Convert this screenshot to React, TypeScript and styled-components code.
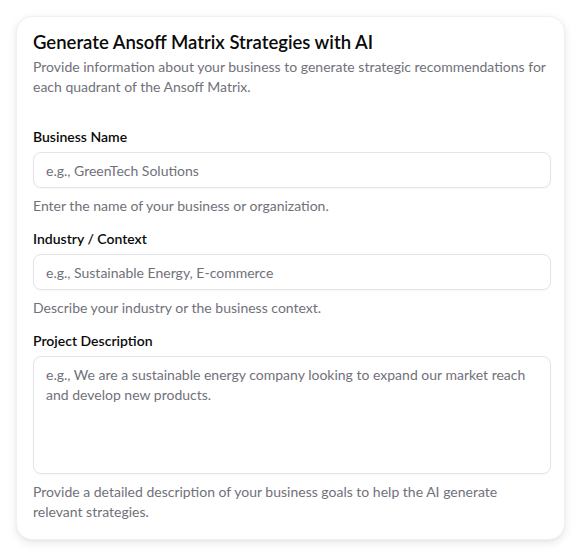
import React from 'react';
import styled, { createGlobalStyle } from 'styled-components';

const GlobalStyle = createGlobalStyle`
  html, body {
    margin: 0;
    padding: 0;
    background: #ffffff;
  }
  body {
    font-family: "Segoe UI", Lato, "Noto Sans", sans-serif;
    color: #0a0a0a;
  }
  * {
    box-sizing: border-box;
  }
`;

type Field = {
  id: string;
  label: string;
  placeholder: string;
  hint: string;
  multiline?: boolean;
};

const fields: Field[] = [
  {
    id: 'businessName',
    label: 'Business Name',
    placeholder: 'e.g., GreenTech Solutions',
    hint: 'Enter the name of your business or organization.',
  },
  {
    id: 'industry',
    label: 'Industry / Context',
    placeholder: 'e.g., Sustainable Energy, E-commerce',
    hint: 'Describe your industry or the business context.',
  },
  {
    id: 'description',
    label: 'Project Description',
    placeholder:
      'e.g., We are a sustainable energy company looking to expand our market reach and develop new products.',
    hint: 'Provide a detailed description of your business goals to help the AI generate relevant strategies.',
    multiline: true,
  },
];

const App: React.FC = () => {
  return (
    <Page>
      <GlobalStyle />
      <Card>
        <Header>
          <Title>Generate Ansoff Matrix Strategies with AI</Title>
          <Description>
            Provide information about your business to generate strategic recommendations for each
            quadrant of the Ansoff Matrix.
          </Description>
        </Header>

        <Form onSubmit={(e) => e.preventDefault()}>
          {fields.map((field) => (
            <FormItem key={field.id}>
              <Label htmlFor={field.id}>{field.label}</Label>
              {field.multiline ? (
                <TextArea id={field.id} placeholder={field.placeholder} />
              ) : (
                <Input id={field.id} type="text" placeholder={field.placeholder} />
              )}
              <Hint>{field.hint}</Hint>
            </FormItem>
          ))}
        </Form>
      </Card>
    </Page>
  );
};

const Page = styled.div`
  padding: 16px 17px 18px 16px;
`;

const Card = styled.div`
  width: 549px;
  background: #ffffff;
  border: 1px solid #f1f1f2;
  border-radius: 16px;
  padding: 16px 13px 17px 16px;
  box-shadow: 0 3px 10px rgba(0, 0, 0, 0.09), 0 1px 3px rgba(0, 0, 0, 0.04);
`;

const Header = styled.div`
  display: flex;
  flex-direction: column;
  gap: 6px;
  margin-bottom: 33px;
`;

const Title = styled.h3`
  margin: 0;
  font-size: 18.5px;
  line-height: 18px;
  font-weight: 600;
  color: #0a0a0a;
`;

const Description = styled.p`
  margin: 0;
  font-size: 14px;
  line-height: 20px;
  color: #71717a;
`;

const Form = styled.form`
  display: flex;
  flex-direction: column;
  gap: 16px;
`;

const FormItem = styled.div`
  display: flex;
  flex-direction: column;
  gap: 8px;
`;

const Label = styled.label`
  font-size: 14px;
  line-height: 14px;
  font-weight: 600;
  color: #0a0a0a;
`;

const fieldBase = `
  width: 100%;
  border: 1px solid #e4e4e7;
  border-radius: 8px;
  background: #ffffff;
  font-family: inherit;
  font-size: 14px;
  color: #0a0a0a;
  padding: 8px 12px;
  outline: none;
  box-shadow: 0 1px 2px rgba(0, 0, 0, 0.03);
  &::placeholder {
    color: #71717a;
  }
`;

const Input = styled.input`
  ${fieldBase}
  height: 36px;
  line-height: 20px;
`;

const TextArea = styled.textarea`
  ${fieldBase}
  display: block;
  height: 118px;
  line-height: 20px;
  resize: none;
`;

const Hint = styled.p`
  margin: 0;
  max-width: 500px;
  font-size: 14px;
  line-height: 20px;
  color: #71717a;
`;

export default App;
